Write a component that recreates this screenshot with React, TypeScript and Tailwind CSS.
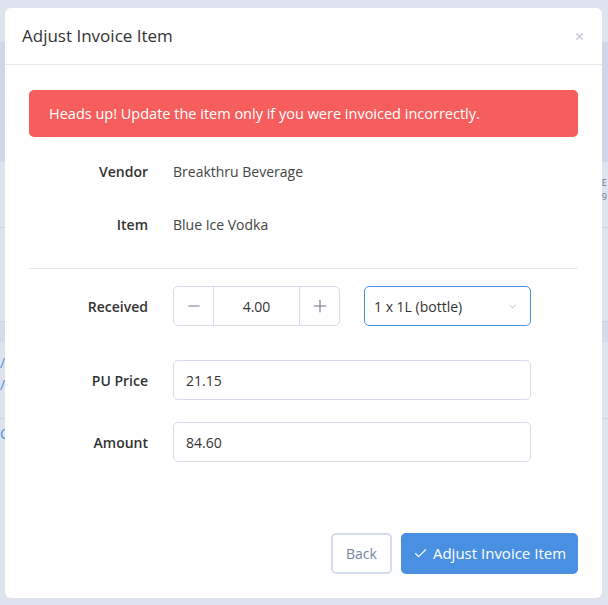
import { Check, ChevronDown, Minus, Plus, X } from "lucide-react";

function Row({ label, children, className = "" }: { label: string; children: React.ReactNode; className?: string }) {
  return (
    <div className={`flex items-center ${className}`}>
      <div className="w-[119px] text-right text-[14px] font-semibold text-[#333]">{label}</div>
      <div className="ml-[25px] flex flex-1 items-center">{children}</div>
    </div>
  );
}

export default function App() {
  return (
    <div className="relative h-[605px] w-[608px] overflow-hidden bg-[#dfe3ee] font-['Open_Sans',sans-serif]">
      {/* page behind the overlay */}
      <div className="flex flex-col">
        <div className="h-[42px]" />
        <div className="h-[120px] bg-[#d1d7e8]" />
        <div className="h-[66px] border-b border-[#cdd2e0]">
          <div className="flex justify-end pr-[1px] pt-[14px] text-[9px] leading-[14px] text-[#6b7590]">
            <div className="flex flex-col">
              <span>E</span>
              <span>9</span>
            </div>
          </div>
        </div>
        <div className="h-[94px] border-b border-[#cdd2e0]" />
        <div className="h-[20px] bg-[#d6dbe8]" />
        <div className="h-[77px] border-b border-[#cdd2e0] pt-[10px] text-[14px] leading-[22px] text-[#4a90e2]">
          <div>/</div>
          <div>/</div>
        </div>
        <div className="pt-[4px] text-[14px] text-[#4a90e2]">C</div>
      </div>

      {/* modal */}
      <div className="absolute left-[5px] top-[8px] flex h-[590px] w-[597px] flex-col rounded-[6px] bg-white">
        <div className="flex h-[57px] items-center justify-between border-b border-[#e6e9ef] pl-[17px] pr-[17px]">
          <h2 className="pb-[1px] text-[17px] text-[#333]">Adjust Invoice Item</h2>
          <X className="size-[11px] text-[#c5ccd8]" strokeWidth={3} />
        </div>

        <div className="flex flex-1 flex-col px-[24px] pt-[25px]">
          <div className="flex h-[47px] items-center rounded-[5px] bg-[#f65e5e] px-[20px] text-[14.5px] text-white">
            Heads up! Update the item only if you were invoiced incorrectly.
          </div>

          <Row label="Vendor" className="mt-[21px] h-[26px]">
            <span className="text-[14px] text-[#444]">Breakthru Beverage</span>
          </Row>
          <Row label="Item" className="mt-[27px] h-[26px]">
            <span className="text-[14px] text-[#444]">Blue Ice Vodka</span>
          </Row>

          <div className="mt-[31px] border-t border-[#e6e9ef]" />

          <Row label="Received" className="mt-[17px]">
            <div className="flex h-[40px] w-[167px] rounded-[5px] border border-[#d5dce8]">
              <div className="flex w-[40px] items-center justify-center border-r border-[#d5dce8] text-[#6b7590]">
                <Minus className="size-[18px]" strokeWidth={1.3} />
              </div>
              <div className="flex flex-1 items-center justify-center text-[14px] text-[#333]">4.00</div>
              <div className="flex w-[40px] items-center justify-center border-l border-[#d5dce8] text-[#6b7590]">
                <Plus className="size-[20px]" strokeWidth={1.3} />
              </div>
            </div>
            <div className="ml-[24px] flex h-[40px] w-[167px] items-center justify-between rounded-[5px] border border-[#4a90e2] pl-[9px] pr-[12px] text-[14px] text-[#333]">
              <span>1 x 1L (bottle)</span>
              <ChevronDown className="size-[11px] text-[#9aa3b5]" strokeWidth={1.5} />
            </div>
          </Row>

          <Row label="PU Price" className="mt-[34px]">
            <div className="flex h-[40px] w-[358px] items-center rounded-[5px] border border-[#d5dce8] px-[12px] text-[14px] text-[#333]">
              21.15
            </div>
          </Row>
          <Row label="Amount" className="mt-[22px]">
            <div className="flex h-[40px] w-[358px] items-center rounded-[5px] border border-[#d5dce8] px-[12px] text-[14px] text-[#333]">
              84.60
            </div>
          </Row>

          <div className="mt-auto mb-[24px] flex justify-end gap-[9px]">
            <button className="h-[41px] w-[61px] rounded-[5px] border-2 border-[#d3ddec] text-[14px] text-[#7686a3]">
              Back
            </button>
            <button className="flex h-[41px] w-[177px] items-center justify-center gap-[5px] rounded-[5px] bg-[#4a90e2] text-[15px] text-white">
              <Check className="size-[15px]" strokeWidth={1.8} />
              Adjust Invoice Item
            </button>
          </div>
        </div>
      </div>
    </div>
  );
}
